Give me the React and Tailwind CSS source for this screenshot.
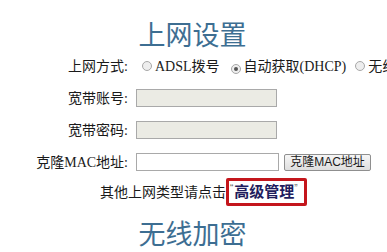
import React from 'react';

const serif = 'font-["Liberation_Serif","Noto_Sans_CJK_SC",serif]';
const sans = 'font-["Liberation_Sans","Noto_Sans_CJK_SC",sans-serif]';

function Radio({ checked }) {
  return (
    <span className="inline-flex h-[10px] w-[10px] items-center justify-center rounded-full border border-[#a8a8a8] bg-[#eeeeee]">
      {checked && <span className="h-[4px] w-[4px] rounded-full bg-[#555]" />}
    </span>
  );
}

function Row({ label, className = 'h-[32px]', children }) {
  return (
    <div className={`flex items-center ${className}`}>
      <div className={`w-[128px] shrink-0 text-right text-[14px] text-[#1a1a1a] ${serif}`}>{label}</div>
      <div className="ml-[8px] flex items-center">{children}</div>
    </div>
  );
}

export default function App() {
  return (
    <div className="h-[252px] w-[387px] overflow-hidden bg-white">
      <div className={`pt-[21px] text-center text-[27px] leading-[30px] text-[#3d6e92] ${serif} pl-[-2px]`}>
        <span className="ml-[-2px]">上网设置</span>
      </div>

      <Row label="上网方式:" className="h-[31px]">
        <div className={`flex items-center whitespace-nowrap text-[14px] text-[#1a1a1a] ${serif}`}>
          <span className="ml-[6px]"><Radio /></span>
          <span className="ml-[3px]">ADSL拨号</span>
          <span className="ml-[11px]"><Radio checked /></span>
          <span className="ml-[3px]">自动获取(DHCP)</span>
          <span className="ml-[9px]"><Radio /></span>
          <span className="ml-[3px]">无线</span>
        </div>
      </Row>

      <Row label="宽带账号:">
        <div className="h-[18px] w-[141px] border border-[#a9a9a9] bg-[#ebebe4]" />
      </Row>

      <Row label="宽带密码:">
        <div className="h-[18px] w-[141px] border border-[#a9a9a9] bg-[#ebebe4]" />
      </Row>

      <Row label="克隆MAC地址:">
        <div className="h-[18px] w-[143px] border border-[#a9a9a9] bg-white" />
        <button className={`ml-[5px] h-[17px] w-[87px] rounded-[2px] border border-[#8f8f8f] bg-gradient-to-b from-[#f6f6f6] to-[#dedede] text-[12px] leading-[15px] text-[#1a1a1a] ${sans}`}>
          克隆MAC地址
        </button>
      </Row>

      <div className="flex h-[28px] items-center pl-[100px]">
        <span className={`text-[14px] text-[#1a1a1a] ${sans}`}>其他上网类型请点击</span>
        <span className="flex h-[28px] w-[81px] items-center rounded-[2px] border-[3px] border-[#c4161c] pl-[1px]">
          <span className={`text-[10px] leading-none text-[#666] ${sans} self-start mt-[3px]`}>“</span>
          <span className={`ml-[1px] text-[15px] font-bold text-[#1f1d5e] ${sans}`}>高级管理</span>
          <span className={`text-[10px] leading-none text-[#666] ${sans} self-start mt-[3px]`}>”</span>
        </span>
      </div>

      <div className={`mt-[14px] text-center text-[27px] leading-[30px] text-[#3d6e92] ${serif}`}>
        <span className="ml-[-2px]">无线加密</span>
      </div>
    </div>
  );
}
